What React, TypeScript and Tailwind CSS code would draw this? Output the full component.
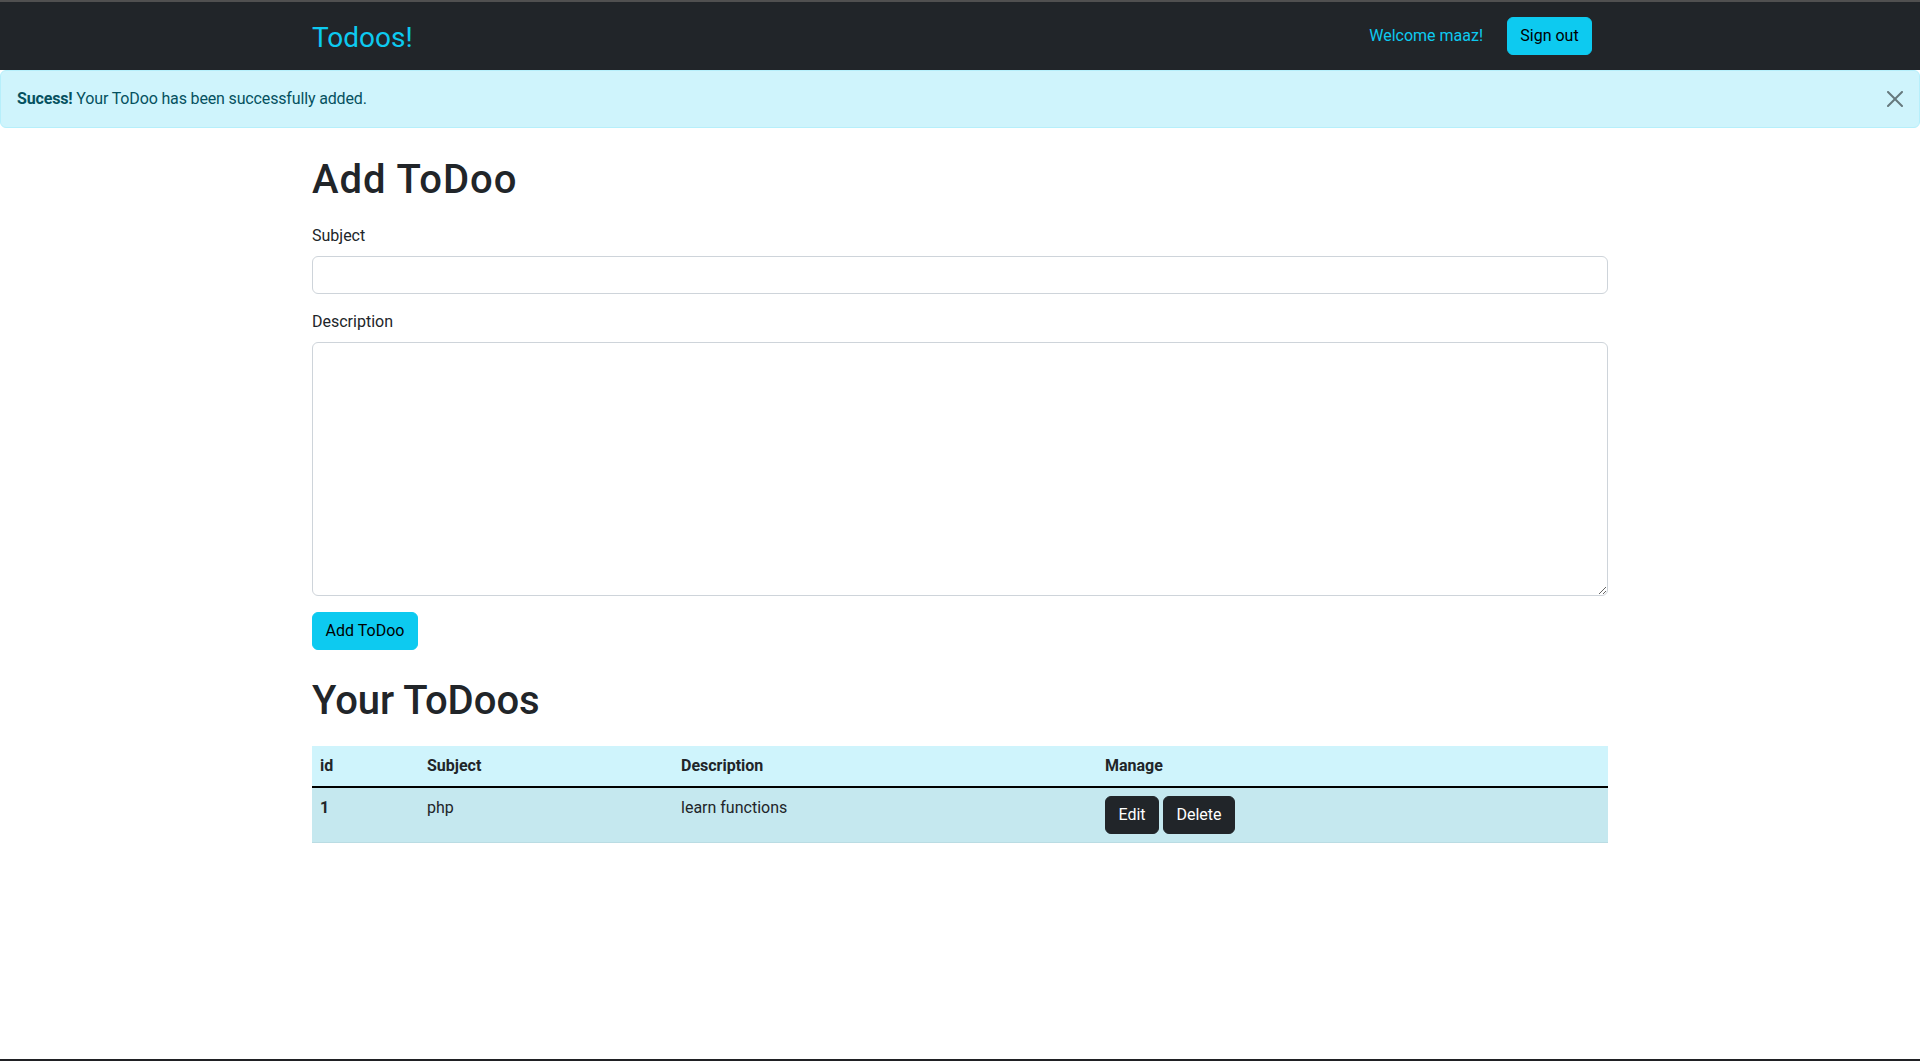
import { useState } from 'react';

type Todo = { id: number; subject: string; description: string };

export default function App() {
  const [showAlert, setShowAlert] = useState(true);
  const todos: Todo[] = [{ id: 1, subject: 'php', description: 'learn functions' }];

  return (
    <div className="min-h-[1061px] flex flex-col bg-white text-[#212529] text-base font-['Roboto',sans-serif] border-t-2 border-[#505050]">
      {/* Navbar */}
      <nav className="bg-[#212529] py-2">
        <div className="mx-auto w-[1320px] px-3 flex items-center justify-between">
          <a href="#" className="text-[28px] leading-[42px] pt-[7px] pb-[3px] text-[#0dcaf0]">Todoos!</a>
          <div className="flex items-center mr-4">
            <span className="text-[#0dcaf0] leading-6 mr-6">Welcome maaz!</span>
            <button className="w-[85px] bg-[#0dcaf0] border border-[#0dcaf0] text-black rounded-md py-1.5 leading-6">Sign out</button>
          </div>
        </div>
      </nav>

      {/* Alert */}
      {showAlert && (
        <div className="relative border border-[#b6effb] bg-[#cff4fc] text-[#055160] rounded-md p-4 pr-12 mb-4 leading-6 tracking-[-0.15px]">
          <strong className="font-bold">Sucess!</strong> Your ToDoo has been successfully added.
          <button
            onClick={() => setShowAlert(false)}
            className="absolute right-0 top-0 px-4 py-5 opacity-50"
            aria-label="Close"
          >
            <svg viewBox="0 0 16 16" className="w-4 h-4 block" fill="#000">
              <path d="M.293.293a1 1 0 0 1 1.414 0L8 6.586 14.293.293a1 1 0 1 1 1.414 1.414L9.414 8l6.293 6.293a1 1 0 0 1-1.414 1.414L8 9.414l-6.293 6.293a1 1 0 0 1-1.414-1.414L6.586 8 .293 1.707a1 1 0 0 1 0-1.414z" />
            </svg>
          </button>
        </div>
      )}
      {!showAlert && <div className="h-[74px]" />}

      {/* Main */}
      <div className="mx-auto w-[1320px] px-3">
        <h1 className="text-[40px] leading-[48px] font-medium tracking-[1px] mt-3 mb-5">Add ToDoo</h1>
        <form onSubmit={(e) => e.preventDefault()}>
          <div className="mb-4">
            <label className="block mb-2 leading-6">Subject</label>
            <input
              type="text"
              className="block w-full h-[38px] border border-[#ced4da] rounded-md px-3 py-1.5 leading-6 outline-none"
            />
          </div>
          <div className="mb-4">
            <label className="block mb-2 leading-6">Description</label>
            <textarea
              rows={10}
              className="block w-full h-[254px] border border-[#ced4da] rounded-md px-3 py-1.5 leading-6 outline-none"
            />
          </div>
          <button className="w-[106px] bg-[#0dcaf0] border border-[#0dcaf0] text-black rounded-md py-1.5 leading-6">Add ToDoo</button>
        </form>

        <h1 className="text-[40px] leading-[48px] font-medium mt-[27px] mb-[21px]">Your ToDoos</h1>

        <table className="w-full table-fixed border-collapse text-left">
          <colgroup>
            <col className="w-[107px]" />
            <col className="w-[254px]" />
            <col className="w-[424px]" />
            <col />
          </colgroup>
          <thead>
            <tr className="bg-[#cff4fc] border-b-2 border-black">
              <th className="px-2 py-2 leading-6 font-bold">id</th>
              <th className="px-2 py-2 leading-6 font-bold">Subject</th>
              <th className="px-2 py-2 leading-6 font-bold">Description</th>
              <th className="px-2 py-2 leading-6 font-bold">Manage</th>
            </tr>
          </thead>
          <tbody>
            {todos.map((t) => (
              <tr key={t.id} className="bg-[#c5e8ef] border-b border-[#badce3]">
                <th className="px-2 py-2 leading-6 font-bold align-top">{t.id}</th>
                <td className="px-2 py-2 leading-6 align-top">{t.subject}</td>
                <td className="px-2 py-2 leading-6 align-top">{t.description}</td>
                <td className="px-2 py-2 leading-6 align-top">
                  <div className="flex gap-1">
                    <button className="w-[54px] bg-[#212529] border border-[#212529] text-white rounded-md py-1.5 leading-6">Edit</button>
                    <button className="w-[72px] bg-[#212529] border border-[#212529] text-white rounded-md py-1.5 leading-6">Delete</button>
                  </div>
                </td>
              </tr>
            ))}
          </tbody>
        </table>
      </div>

      <div className="mt-auto h-[2px] bg-[#202124]" />
    </div>
  );
}
